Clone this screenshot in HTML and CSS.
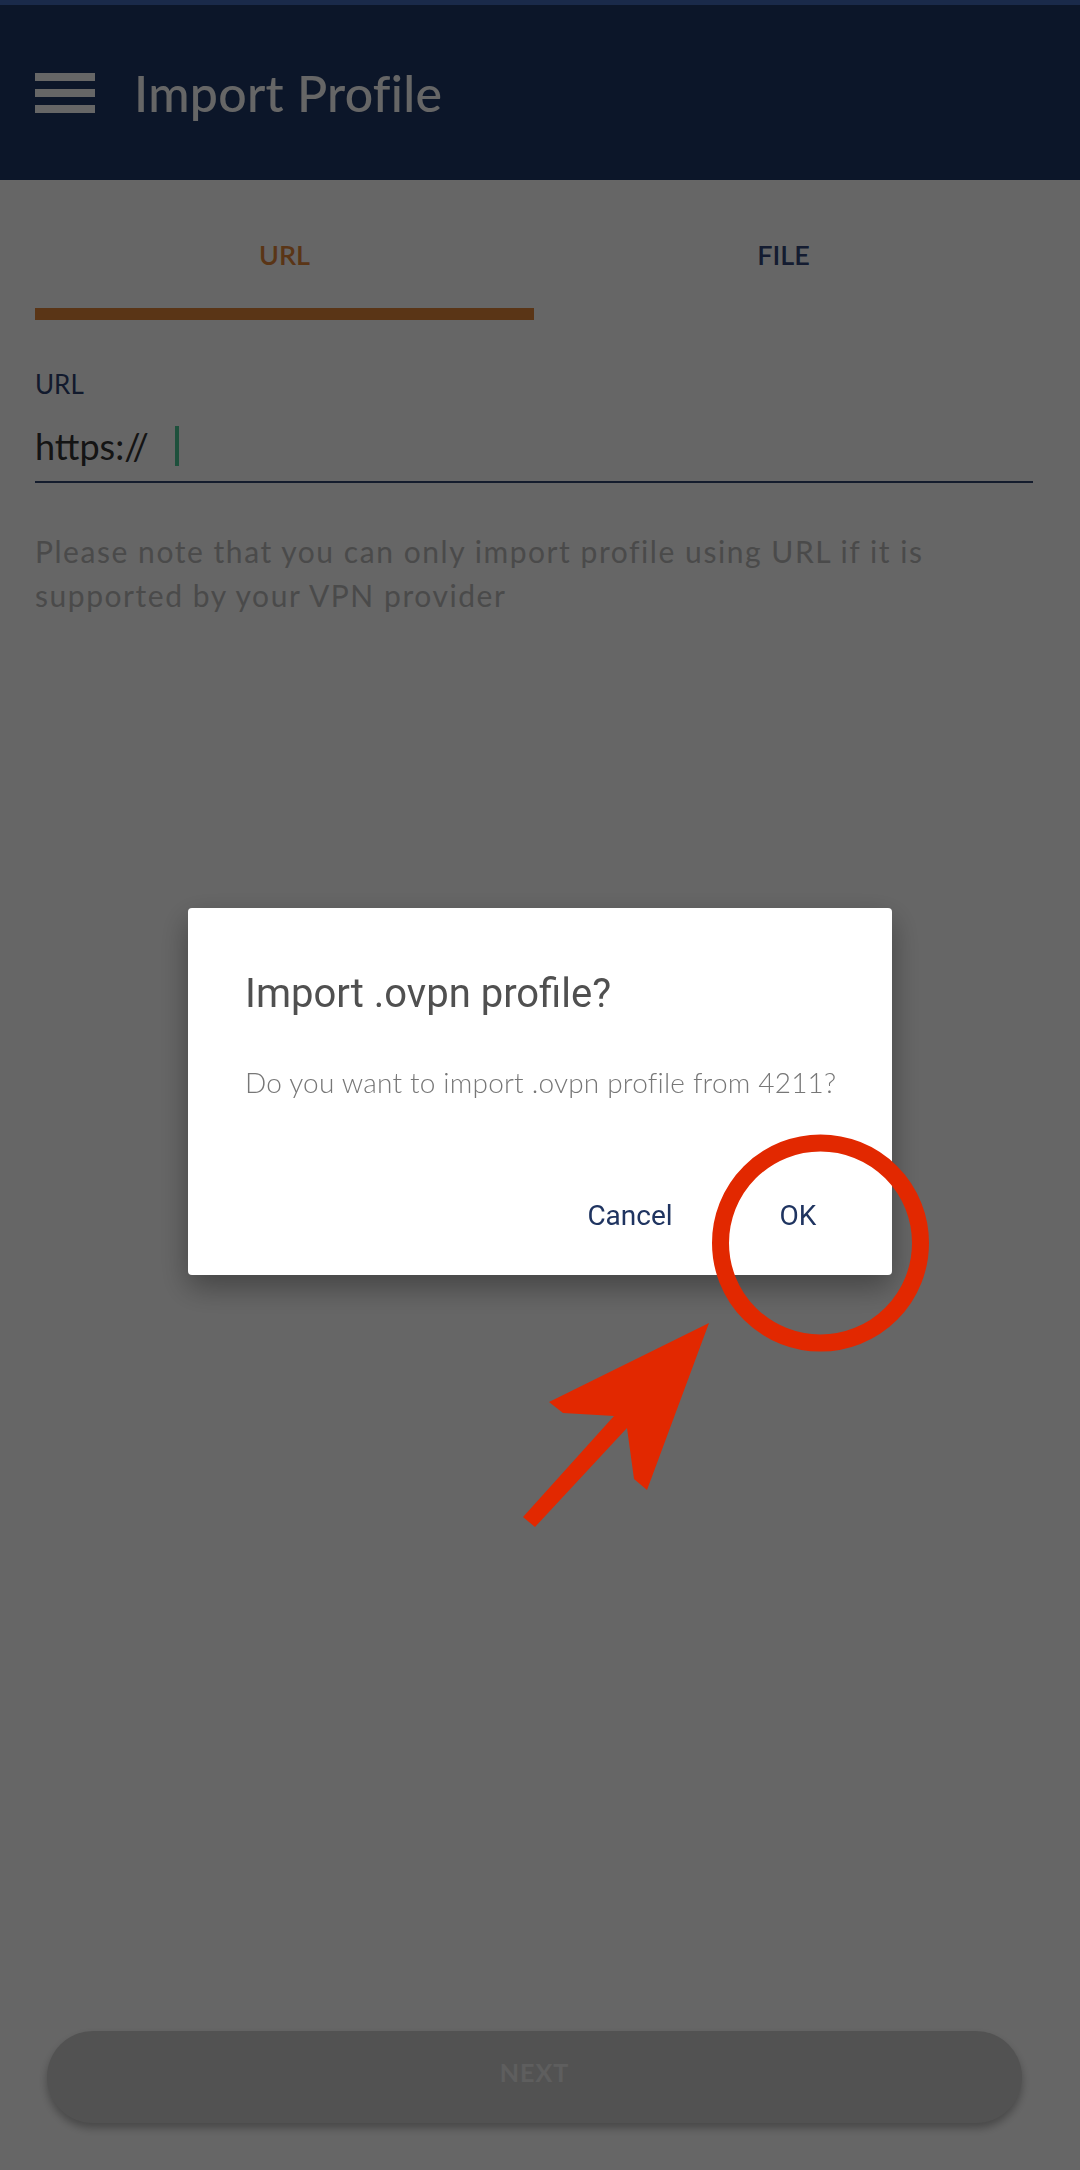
FILE: index.html
```html
<!DOCTYPE html>
<html lang="en">
<head>
  <meta charset="UTF-8" />
  <meta name="viewport" content="width=device-width, initial-scale=1.0" />
  <title>Import Profile</title>
  <link rel="stylesheet" href="styles.css">
</head>
<body>
  <div class="status-strip"></div>
  <header class="app-bar">
    <div class="menu-icon"><span></span><span></span><span></span></div>
    <h1>Import Profile</h1>
  </header>

  <nav class="tabs">
    <div class="tab active">
      <span class="tab-label">URL</span>
      <span class="tab-line"></span>
    </div>
    <div class="tab">
      <span class="tab-label">FILE</span>
      <span class="tab-line"></span>
    </div>
  </nav>

  <main class="form">
    <label class="field-label">URL</label>
    <div class="field-input">
      <span class="field-value">https://</span>
      <span class="cursor"></span>
    </div>
    <p class="note">Please note that you can only import profile using URL if it is supported by your VPN provider</p>
  </main>

  <div class="bottom">
    <button class="next-btn">NEXT</button>
  </div>

  <!-- modal -->
  <div class="scrim">
    <div class="dialog">
      <h2 class="dialog-title">Import .ovpn profile?</h2>
      <p class="dialog-text">Do you want to import .ovpn profile from 4211?</p>
      <div class="dialog-actions">
        <button class="dialog-btn">Cancel</button>
        <button class="dialog-btn">OK</button>
      </div>
    </div>
  </div>

  <!-- red markup drawn over the screenshot -->
  <svg class="annotation" viewBox="0 0 1080 2170" width="1080" height="2170">
    <circle cx="820.5" cy="1243" r="100" fill="none" stroke="#e22800" stroke-width="17" />
    <polygon fill="#e22800" points="709,1323 647,1490 634,1479 627,1428 535,1527 523,1517 614,1416 563,1413 549,1402" />
  </svg>
</body>
</html>
```

FILE: styles.css
```css
body {
  margin: 0;
  height: 100vh;
  display: flex;
  flex-direction: column;
  background: #ffffff;
  font-family: Lato, 'Open Sans', sans-serif;
  overflow: hidden;
}
.status-strip {
  height: 5px;
  background: #4169b9;
}
.app-bar {
  height: 175px;
  background: #203766;
  display: flex;
  align-items: center;
  padding-left: 35px;
  gap: 39px;
}
.menu-icon {
  display: flex;
  flex-direction: column;
  gap: 8px;
  width: 60px;
}
.menu-icon span {
  height: 8px;
  background: #ffffff;
}
.app-bar h1 {
  margin: 0;
  color: #ffffff;
  font-size: 50px;
  font-weight: 500;
  letter-spacing: 0.3px;
}
.tabs {
  display: flex;
  padding: 0 47px 0 35px;
}
.tab {
  flex: 1;
  display: flex;
  flex-direction: column;
  align-items: center;
  padding-top: 55px;
}
.tab-label {
  line-height: 40px;
  font-size: 27px;
  font-weight: 600;
  color: #33487a;
  margin-bottom: 33px;
}
.tab-line {
  align-self: stretch;
  height: 12px;
}
.tab.active .tab-label {
  color: #e18439;
}
.tab.active .tab-line {
  background: #e18439;
}
.form {
  padding: 0 35px;
  margin-top: 49px;
  display: flex;
  flex-direction: column;
}
.field-label {
  font-size: 26px;
  line-height: 30px;
  color: #2e4272;
}
.field-input {
  margin-top: 27px;
  margin-right: 12px;
  padding-bottom: 15px;
  border-bottom: 2px solid #324670;
  display: flex;
  align-items: center;
}
.field-value {
  font-size: 36px;
  line-height: 40px;
  color: #333333;
}
.cursor {
  width: 4px;
  height: 40px;
  margin-left: 26px;
  background: #4bc896;
}
.note {
  margin: 47px 0 0;
  max-width: 950px;
  font-size: 30px;
  line-height: 43.5px;
  letter-spacing: 1.55px;
  color: #b9b9b9;
}
.bottom {
  margin-top: auto;
  padding: 0 58px 47px 47px;
}
.next-btn {
  width: 100%;
  height: 92px;
  padding-bottom: 12px;
  border: none;
  border-radius: 46px;
  background: #cdcdcd;
  box-shadow: 0 5px 8px rgba(0,0,0,0.3);
  color: #ebebeb;
  font-family: Lato, sans-serif;
  font-size: 25px;
  font-weight: 700;
  letter-spacing: 1px;
}
.scrim {
  position: fixed;
  top: 0;
  left: 0;
  right: 0;
  bottom: 0;
  background: rgba(0,0,0,0.6);
  display: flex;
  align-items: center;
  justify-content: center;
}
.dialog {
  width: 704px;
  margin-top: 12px;
  box-sizing: border-box;
  background: #ffffff;
  border-radius: 4px;
  box-shadow: 0 12px 30px rgba(0,0,0,0.35);
  padding: 62px 10px 21px 57px;
}
.dialog-title {
  margin: 0;
  font-family: Roboto, sans-serif;
  font-size: 40px;
  line-height: 48px;
  font-weight: 400;
  color: #505050;
}
.dialog-text {
  margin: 46px 0 0;
  font-size: 28px;
  line-height: 36px;
  font-weight: 300;
  letter-spacing: 0.2px;
  color: #777777;
}
.dialog-actions {
  margin-top: 78px;
  display: flex;
  justify-content: flex-end;
}
.dialog-btn {
  width: 168px;
  padding: 20px 0;
  border: none;
  background: none;
  font-family: Roboto, sans-serif;
  font-size: 28px;
  line-height: 36px;
  color: #1f3460;
}
.annotation {
  position: absolute;
  top: 0;
  left: 0;
  pointer-events: none;
}
```
